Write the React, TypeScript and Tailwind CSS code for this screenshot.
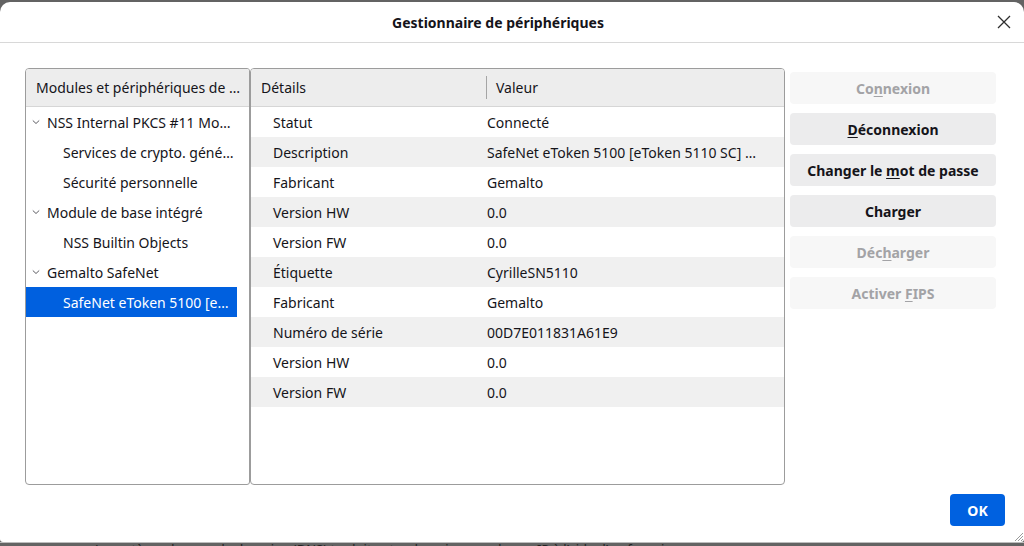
import React from 'react';

const font = { fontFamily: '"Noto Sans", "Open Sans", sans-serif' };

type Node = { label: string; depth: number; open?: boolean; selected?: boolean };

const tree: Node[] = [
  { label: 'NSS Internal PKCS #11 Module', depth: 0, open: true },
  { label: 'Services de crypto. génériques', depth: 1 },
  { label: 'Sécurité personnelle', depth: 1 },
  { label: 'Module de base intégré', depth: 0, open: true },
  { label: 'NSS Builtin Objects', depth: 1 },
  { label: 'Gemalto SafeNet', depth: 0, open: true },
  { label: 'SafeNet eToken 5100 [eToken 5110 SC]', depth: 1, selected: true },
];

// description value is shown cut short in the dialog
const details: [string, string][] = [
  ['Statut', 'Connecté'],
  ['Description', 'SafeNet eToken 5100 [eToken 5110 SC] …'],
  ['Fabricant', 'Gemalto'],
  ['Version HW', '0.0'],
  ['Version FW', '0.0'],
  ['Étiquette', 'CyrilleSN5110'],
  ['Fabricant', 'Gemalto'],
  ['Numéro de série', '00D7E011831A61E9'],
  ['Version HW', '0.0'],
  ['Version FW', '0.0'],
];

function Chevron() {
  return (
    <svg width="8" height="6" viewBox="0 0 8 6" className="shrink-0">
      <path d="M0.8 1.5 L4 4.5 L7.2 1.5" fill="none" stroke="#4a4950" strokeWidth="0.9" />
    </svg>
  );
}

function ActionButton({ disabled, children }: { disabled?: boolean; children: React.ReactNode }) {
  return (
    <div
      className={
        'flex h-[32px] items-center justify-center rounded-[4px] text-[14px] font-bold ' +
        (disabled ? 'bg-[#f7f7f7] text-[#a3a3a6]' : 'bg-[#ececed] text-[#15141a]')
      }
    >
      {children}
    </div>
  );
}

export default function App() {
  return (
    <div className="relative h-[546px] w-[1024px] overflow-hidden bg-[#636363]" style={font}>
      <div className="pt-[2px]">
        <div className="relative flex h-[540px] flex-col rounded-t-[10px] rounded-b-[3px] bg-white text-[#15141a]">
          {/* title bar */}
          <div className="relative flex h-[41px] shrink-0 items-center justify-center border-b border-[#d8d8d8] pr-[28px]">
            <span className="text-[14px] font-bold">Gestionnaire de périphériques</span>
            <svg width="14" height="14" viewBox="0 0 14 14" className="absolute right-[13px] top-[13px]">
              <path d="M1 1 L13 13 M13 1 L1 13" stroke="#2e2e2e" strokeWidth="1.3" />
            </svg>
          </div>

          {/* body */}
          <div className="flex pl-[25px] pt-[25px]">
            {/* tree */}
            <div className="h-[417px] w-[225px] shrink-0 overflow-hidden rounded-l-[4px] rounded-r-[3px] border border-[#9c9c9c]">
              <div className="flex h-[38px] items-center border-b border-[#d6d6d6] bg-[#ededed] pl-[10px] pr-[8px] text-[14px]">
                <span className="truncate">Modules et périphériques de sécurité</span>
              </div>
              <div className="pr-[12px]">
                {tree.map((n, i) => (
                  <div
                    key={i}
                    className={
                      'flex h-[30px] items-center gap-[7px] text-[14px] ' +
                      (n.selected ? 'bg-[#0060df] text-white' : '') +
                      (n.depth === 0 ? ' pl-[6px]' : ' pl-[37px]')
                    }
                  >
                    {n.open && <Chevron />}
                    <span className="truncate pr-[3px]">{n.label}</span>
                  </div>
                ))}
              </div>
            </div>

            {/* details */}
            <div className="h-[417px] w-[535px] shrink-0 overflow-hidden rounded-[4px] border border-[#9c9c9c]">
              <div className="flex h-[38px] items-center border-b border-[#d6d6d6] bg-[#ededed] text-[14px]">
                <div className="w-[235px] pl-[10px]">Détails</div>
                <div className="h-[23px] w-px bg-[#a5a5a5]" />
                <div className="pl-[9px]">Valeur</div>
              </div>
              {details.map(([k, v], i) => (
                <div
                  key={i}
                  className={'flex h-[30px] items-center text-[14px] ' + (i % 2 === 1 ? 'bg-[#f0f0f0]' : 'bg-white')}
                >
                  <div className="w-[236px] shrink-0 pl-[22px]">{k}</div>
                  <div className="min-w-0 flex-1 truncate pr-[8px]">{v}</div>
                </div>
              ))}
            </div>

            {/* buttons */}
            <div className="ml-[5px] flex w-[206px] shrink-0 flex-col gap-[9px] pt-[4px]">
              <ActionButton disabled>
                <span>
                  Co<u className="underline-offset-2">n</u>nexion
                </span>
              </ActionButton>
              <ActionButton>
                <span>
                  <u className="underline-offset-2">D</u>éconnexion
                </span>
              </ActionButton>
              <ActionButton>
                <span>
                  Changer le <u className="underline-offset-2">m</u>ot de passe
                </span>
              </ActionButton>
              <ActionButton>Charger</ActionButton>
              <ActionButton disabled>
                <span>
                  Déc<u className="underline-offset-2">h</u>arger
                </span>
              </ActionButton>
              <ActionButton disabled>
                <span>
                  Activer <u className="underline-offset-2">F</u>IPS
                </span>
              </ActionButton>
            </div>
          </div>

          {/* footer */}
          <div className="flex justify-end pr-[19px] pt-[9px]">
            <div className="flex h-[32px] w-[55px] items-center justify-center rounded-[4px] bg-[#0061e0] text-[14px] font-bold text-white">
              OK
            </div>
          </div>

          {/* resize grip */}
          <svg width="10" height="10" viewBox="0 0 10 10" className="absolute bottom-0 right-0">
            <path d="M9 1 L1 9 M9 4 L4 9 M9 7 L7 9" stroke="#9a9a9a" strokeWidth="1" />
          </svg>
        </div>
        <div className="h-[4px] border-t border-[#bdbdbd] pl-[95px] text-[13px] leading-[12px] text-[#222]">
          Le système de nom de domaine (DNS) traduit votre domaine en adresse IP à l’aide d’un fournisseur
        </div>
      </div>
    </div>
  );
}
